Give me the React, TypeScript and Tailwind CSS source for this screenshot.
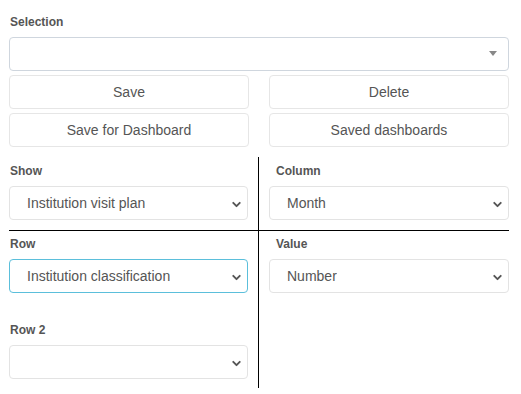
import { ChevronDown } from "lucide-react";

const font = { fontFamily: '"Liberation Sans", Arial, sans-serif' };

function Label({ children, indent }: { children: string; indent?: boolean }) {
  return (
    <div
      className={`text-[12px] font-bold leading-[17px] text-[#555] mb-[6px] ${
        indent ? "pl-[7px]" : "pl-[1px]"
      }`}
    >
      {children}
    </div>
  );
}

function Select({ value, focused }: { value?: string; focused?: boolean }) {
  return (
    <div
      className={`relative h-[34px] w-full rounded-[4px] border bg-white flex items-center pl-[17px] pr-[30px] text-[14px] text-[#555] ${
        focused ? "border-[#5bbfdb]" : "border-[#e3e3e3]"
      }`}
    >
      <span className="truncate">{value}</span>
      <ChevronDown
        size={13}
        strokeWidth={3.5}
        className="absolute right-[4px] top-[11px] text-[#555]"
      />
    </div>
  );
}

function Btn({ children }: { children: string }) {
  return (
    <button className="h-[34px] w-full rounded-[4px] border border-[#e6e6e6] bg-white text-[14px] text-[#555]">
      {children}
    </button>
  );
}

export default function App() {
  return (
    <div className="min-h-screen bg-white" style={font}>
      <div className="ml-[9px] w-[500px] pt-[14px]">
        <Label>Selection</Label>
        <div className="relative h-[34px] rounded-[4px] border border-[#cfd6de] bg-white">
          <span className="absolute right-[11px] top-[13px] h-0 w-0 border-l-[4px] border-r-[4px] border-t-[5px] border-l-transparent border-r-transparent border-t-[#888]" />
        </div>

        <div className="mt-[4px] grid grid-cols-2 gap-x-[20px] gap-y-[4px]">
          <Btn>Save</Btn>
          <Btn>Delete</Btn>
          <Btn>Save for Dashboard</Btn>
          <Btn>Saved dashboards</Btn>
        </div>

        <div className="mt-[10px] grid grid-cols-[250px_1fr]">
          <div className="border-r border-b border-black pr-[10px] pt-[6px] pb-[10px]">
            <Label>Show</Label>
            <Select value="Institution visit plan" />
          </div>
          <div className="border-b border-black pl-[10px] pt-[6px] pb-[10px]">
            <Label indent>Column</Label>
            <Select value="Month" />
          </div>
          <div className="border-r border-black pr-[10px] pt-[5px] pb-[9px]">
            <Label>Row</Label>
            <Select value="Institution classification" focused />
            <div className="mt-[29px]">
              <Label>Row 2</Label>
              <Select />
            </div>
          </div>
          <div className="pl-[10px] pt-[5px]">
            <Label indent>Value</Label>
            <Select value="Number" />
          </div>
        </div>
      </div>
    </div>
  );
}
